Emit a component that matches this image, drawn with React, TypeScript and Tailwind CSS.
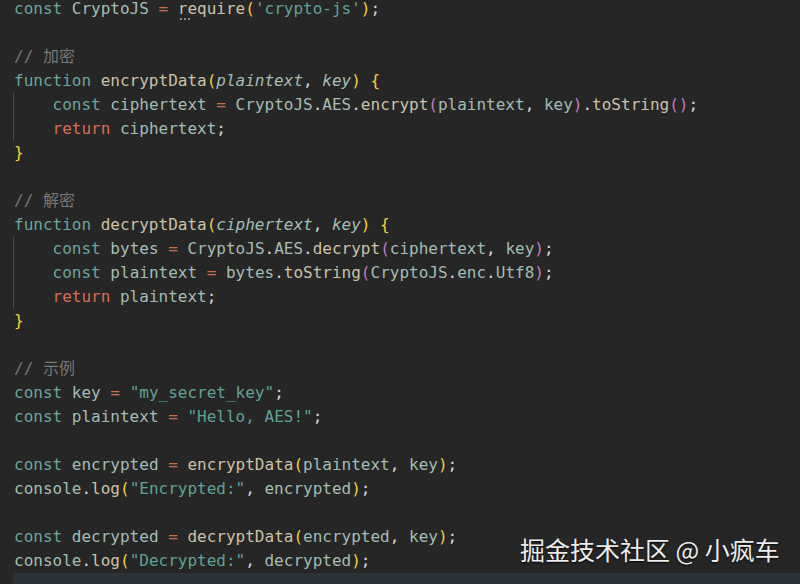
import React from "react";

type Tok = [string, string];

const K = "text-[#6aa59e]"; // keyword
const I = "text-[#a3bdb5]"; // identifier
const F = "text-[#cdc1a6]"; // function
const S = "text-[#5fa294]"; // string
const O = "text-[#d4704e]"; // operator / return
const Y = "text-[#f3d03c]"; // brace
const M = "text-[#c57ac3]"; // nested paren
const C = "text-[#777777]"; // comment
const P = "text-[#d6d6d6]"; // punctuation
const A = "italic text-[#a3bdb5]"; // param
const W = ""; // whitespace

const lines: { toks: Tok[]; guide?: boolean; active?: boolean; req?: boolean }[] = [
  {
    req: true,
    toks: [
      [K, "const"], [W, " "], [I, "CryptoJS"], [W, " "], [O, "="], [W, " "],
      ["REQ", "require"], [Y, "("], [S, "'crypto-js'"], [Y, ")"], [P, ";"],
    ],
  },
  { toks: [] },
  { toks: [[C, "// 加密"]] },
  {
    toks: [
      [K, "function"], [W, " "], [F, "encryptData"], [Y, "("], [A, "plaintext"], [P, ", "],
      [A, "key"], [Y, ")"], [W, " "], [Y, "{"],
    ],
  },
  {
    guide: true,
    toks: [
      [W, "   "], [K, "const"], [W, " "], [I, "ciphertext"], [W, " "], [O, "="], [W, " "],
      [I, "CryptoJS"], [P, "."], [I, "AES"], [P, "."], [F, "encrypt"], [M, "("], [I, "plaintext"],
      [P, ", "], [I, "key"], [M, ")"], [P, "."], [F, "toString"], [M, "()"], [P, ";"],
    ],
  },
  { guide: true, toks: [[W, "   "], [O, "return"], [W, " "], [I, "ciphertext"], [P, ";"]] },
  { toks: [[Y, "}"]] },
  { toks: [] },
  { toks: [[C, "// 解密"]] },
  {
    toks: [
      [K, "function"], [W, " "], [F, "decryptData"], [Y, "("], [A, "ciphertext"], [P, ", "],
      [A, "key"], [Y, ")"], [W, " "], [Y, "{"],
    ],
  },
  {
    guide: true,
    toks: [
      [W, "   "], [K, "const"], [W, " "], [I, "bytes"], [W, " "], [O, "="], [W, " "],
      [I, "CryptoJS"], [P, "."], [I, "AES"], [P, "."], [F, "decrypt"], [M, "("], [I, "ciphertext"],
      [P, ", "], [I, "key"], [M, ")"], [P, ";"],
    ],
  },
  {
    guide: true,
    toks: [
      [W, "   "], [K, "const"], [W, " "], [I, "plaintext"], [W, " "], [O, "="], [W, " "],
      [I, "bytes"], [P, "."], [F, "toString"], [M, "("], [I, "CryptoJS"], [P, "."], [I, "enc"],
      [P, "."], [I, "Utf8"], [M, ")"], [P, ";"],
    ],
  },
  { guide: true, toks: [[W, "   "], [O, "return"], [W, " "], [I, "plaintext"], [P, ";"]] },
  { toks: [[Y, "}"]] },
  { toks: [] },
  { toks: [[C, "// 示例"]] },
  {
    toks: [
      [K, "const"], [W, " "], [I, "key"], [W, " "], [O, "="], [W, " "], [S, "\"my_secret_key\""], [P, ";"],
    ],
  },
  {
    toks: [
      [K, "const"], [W, " "], [I, "plaintext"], [W, " "], [O, "="], [W, " "], [S, "\"Hello, AES!\""], [P, ";"],
    ],
  },
  { toks: [] },
  {
    toks: [
      [K, "const"], [W, " "], [I, "encrypted"], [W, " "], [O, "="], [W, " "], [F, "encryptData"],
      [Y, "("], [I, "plaintext"], [P, ", "], [I, "key"], [Y, ")"], [P, ";"],
    ],
  },
  {
    toks: [
      [I, "console"], [P, "."], [F, "log"], [Y, "("], [S, "\"Encrypted:\""], [P, ", "],
      [I, "encrypted"], [Y, ")"], [P, ";"],
    ],
  },
  { toks: [] },
  {
    toks: [
      [K, "const"], [W, " "], [I, "decrypted"], [W, " "], [O, "="], [W, " "], [F, "decryptData"],
      [Y, "("], [I, "encrypted"], [P, ", "], [I, "key"], [Y, ")"], [P, ";"],
    ],
  },
  {
    toks: [
      [I, "console"], [P, "."], [F, "log"], [Y, "("], [S, "\"Decrypted:\""], [P, ", "],
      [I, "decrypted"], [Y, ")"], [P, ";"],
    ],
  },
  { active: true, toks: [] },
];

export default function App() {
  return (
    <div className="relative w-[800px] h-[584px] overflow-hidden bg-[#262626]">
      <div
        className="mt-[-3px] pl-[13px] text-[16px] leading-[24px] whitespace-pre"
        style={{ fontFamily: '"DejaVu Sans Mono", "Noto Sans CJK SC", monospace' }}
      >
        {lines.map((ln, i) => (
          <div
            key={i}
            className={
              "h-[24px] " +
              (ln.guide ? "border-l border-[#4a4a4a] " : "pl-[1px] ") +
              (ln.active ? "bg-[#2b3338]" : "")
            }
          >
            {ln.guide ? <span> </span> : null}
            {ln.toks.map((t, j) =>
              t[0] === "REQ" ? (
                <span key={j} className="relative text-[#cdc1a6]">
                  require
                  <span className="absolute left-[2px] top-[19px] flex gap-[2px]">
                    <span className="w-[2px] h-[2px] bg-[#8a8a8a]" />
                    <span className="w-[2px] h-[2px] bg-[#8a8a8a]" />
                    <span className="w-[2px] h-[2px] bg-[#8a8a8a]" />
                  </span>
                </span>
              ) : (
                <span key={j} className={t[0]}>
                  {t[1]}
                </span>
              )
            )}
          </div>
        ))}
      </div>
      <div
        className="absolute left-[520px] top-[533px] text-[25px] leading-[32px] text-[#ececec] whitespace-nowrap [text-shadow:0_1px_2px_rgba(0,0,0,0.9)]"
        style={{ fontFamily: '"Noto Sans CJK SC", "Noto Sans", sans-serif' }}
      >
        掘金技术社区 @ 小疯车
      </div>
    </div>
  );
}
